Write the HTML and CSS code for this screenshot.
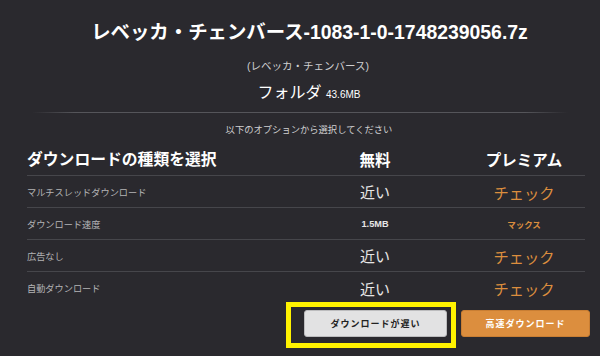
FILE: index.html
```html
<!DOCTYPE html>
<html lang="ja">
<head>
    <meta charset="UTF-8">
    <meta name="viewport" content="width=device-width, initial-scale=1.0">
    <title>ダウンロード</title>
    <link rel="stylesheet" href="styles.css">
</head>
<body>
    <div class="container">
        <div class="file-info">
            <h1 class="file-name">レベッカ・チェンバース-1083-1-0-1748239056.7z</h1>
            <p class="file-sub">(レベッカ・チェンバース)</p>
            <p class="file-type">フォルダ <span class="file-size">43.6MB</span></p>
        </div>
        <div class="divider"></div>
        <p class="hint">以下のオプションから選択してください</p>

        <div class="plans">
            <div class="row head">
                <div class="cell label">ダウンロードの種類を選択</div>
                <div class="cell">無料</div>
                <div class="cell">プレミアム</div>
            </div>
            <div class="row">
                <div class="cell label">マルチスレッドダウンロード</div>
                <div class="cell free">近い</div>
                <div class="cell premium">チェック</div>
            </div>
            <div class="row">
                <div class="cell label">ダウンロード速度</div>
                <div class="cell free small">1.5MB</div>
                <div class="cell premium small">マックス</div>
            </div>
            <div class="row">
                <div class="cell label">広告なし</div>
                <div class="cell free">近い</div>
                <div class="cell premium">チェック</div>
            </div>
            <div class="row last">
                <div class="cell label">自動ダウンロード</div>
                <div class="cell free">近い</div>
                <div class="cell premium">チェック</div>
            </div>
        </div>

        <div class="actions">
            <span class="marked">
                <button class="btn btn-slow">ダウンロードが遅い</button>
            </span>
            <button class="btn btn-fast">高速ダウンロード</button>
        </div>
    </div>
</body>
</html>
```

FILE: styles.css
```css
:root {
    --background-color: #2a292e;
    --text-color: #ffffff;
    --muted-color: #cfcfd1;
    --label-color: #b4b4b6;
    --line-color: #46464b;
    --accent-color: #dc8e3e;
    --mark-color: #fff200;
}
body {
    margin: 0;
    background-color: var(--background-color);
    color: var(--text-color);
    font-family: "Liberation Sans", "Noto Sans CJK JP", sans-serif;
}
.container {
    width: 600px;
    height: 356px;
    overflow: hidden;
    box-sizing: border-box;
    padding-top: 20px;
}
.file-info {
    text-align: center;
}
.file-name {
    margin: 0;
    font-size: 19.4px;
    line-height: 24px;
    font-weight: bold;
    padding-left: 19px;
}
.file-sub {
    margin: 14px 0 0;
    font-size: 10.5px;
    line-height: 16px;
    color: var(--muted-color);
    padding-left: 16px;
}
.file-type {
    margin: 8px 0 0;
    font-size: 16px;
    line-height: 22px;
    padding-left: 18px;
}
.file-size {
    font-size: 10px;
}
.divider {
    height: 1px;
    margin: 6px 32px 0;
    background: linear-gradient(to right, rgba(90,90,95,0), #55555a 8%, #55555a 92%, rgba(90,90,95,0));
}
.hint {
    margin: 10px 0 0;
    text-align: center;
    font-size: 9.3px;
    line-height: 14px;
    color: var(--muted-color);
    padding-left: 18px;
}
.plans {
    margin: 5px 15px 0 27px;
}
.row {
    display: grid;
    grid-template-columns: 260px 176px 122px;
    align-items: center;
    height: 31px;
    border-bottom: 1px solid var(--line-color);
}
.row.head {
    height: 33px;
}
.row.last {
    height: 32px;
    border-bottom: none;
}
.cell {
    text-align: center;
}
.cell.label {
    text-align: left;
    font-size: 9.2px;
    color: var(--label-color);
}
.head .cell {
    font-size: 15.5px;
    font-weight: bold;
    color: var(--text-color);
}
.head .cell.label {
    font-size: 15.8px;
}
.free {
    font-size: 15px;
    color: #e6e6e6;
}
.premium {
    font-size: 15.3px;
    color: var(--accent-color);
}
.free.small {
    font-size: 9.2px;
    font-weight: bold;
}
.premium.small {
    font-size: 8.5px;
    font-weight: bold;
}
.actions {
    display: flex;
    justify-content: flex-end;
    gap: 14px;
    margin: 6px 10px 0 0;
}
.marked {
    position: relative;
    display: flex;
}
.marked::after {
    content: '';
    position: absolute;
    top: -8px;
    left: -18px;
    right: -9px;
    bottom: -11px;
    border: 5px solid var(--mark-color);
    pointer-events: none;
}
.btn {
    height: 27px;
    border-radius: 3px;
    font-family: "Liberation Sans", "Noto Sans CJK JP", sans-serif;
    font-size: 9px;
    font-weight: bold;
    letter-spacing: 1px;
    cursor: pointer;
    padding: 0;
}
.btn-slow {
    width: 143px;
    background-color: #e2e2e3;
    color: #222222;
    border: 1px solid #bcbcbe;
}
.btn-fast {
    width: 129px;
    background-color: var(--accent-color);
    color: #ffffff;
    border: 1px solid #c97e33;
}
```
